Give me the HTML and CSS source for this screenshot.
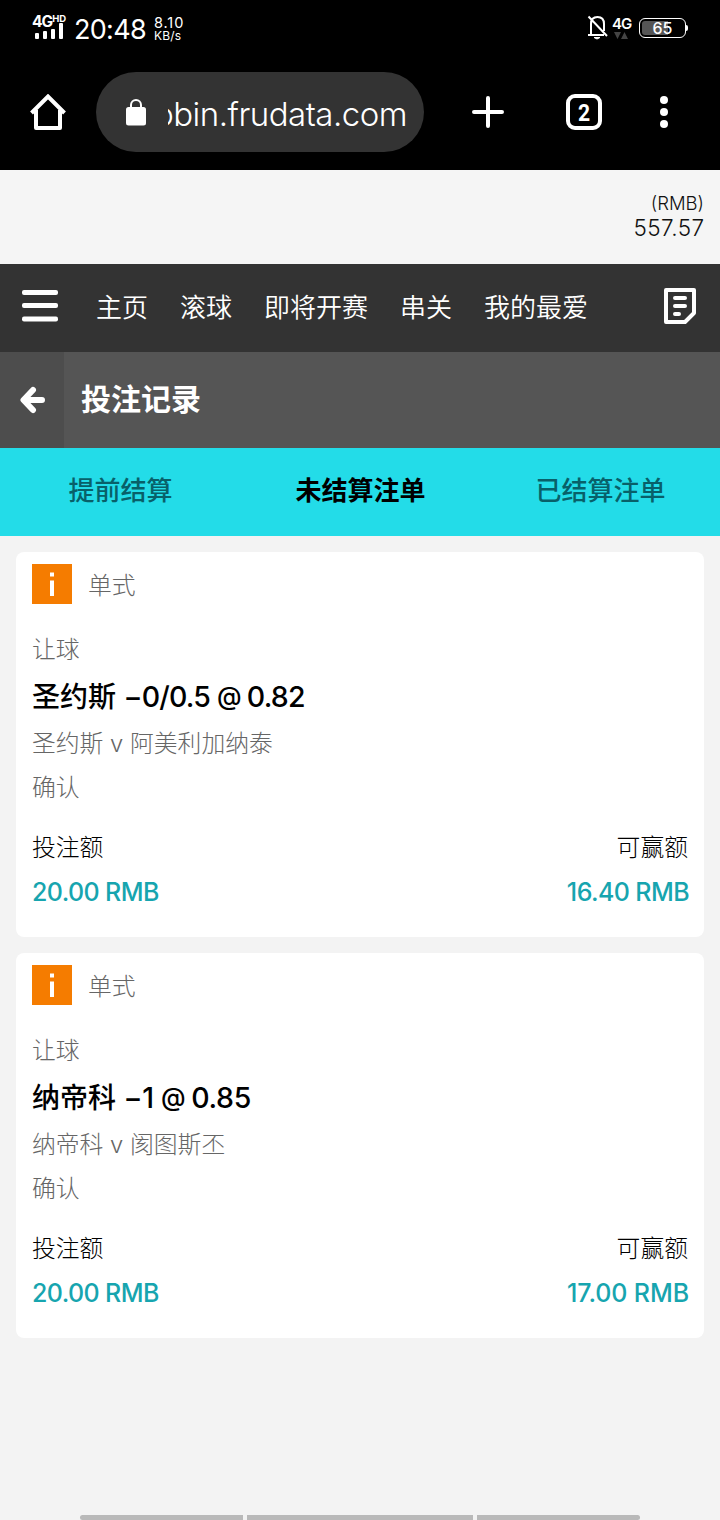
FILE: index.html
```html
<!DOCTYPE html>
<html lang="zh-CN">
<head>
<meta charset="utf-8">
<title>投注记录</title>
<link rel="stylesheet" href="styles.css">
</head>
<body>
<div class="screen">
  <div class="status">
    <div class="signal">
      <div class="signal-label">4G<span class="hd">HD</span></div>
      <svg width="30" height="17" viewBox="0 0 30 17" fill="#fff"><rect x="0" y="10" width="4" height="6" rx="1"/><rect x="8" y="8" width="4" height="8" rx="1"/><rect x="16" y="6" width="4" height="10" rx="1"/><rect x="24" y="0" width="4" height="16" rx="1"/></svg>
    </div>
    <div class="clock">20:48</div>
    <div class="speed"><span class="rate">8.10</span><span class="unit">KB/s</span></div>
    <div class="status-right">
      <svg class="bell" width="22" height="26" viewBox="0 0 22 26" fill="none" stroke="#fff" stroke-width="2"><path d="M4 21V10C4 5.500 6.500 3 10.500 3S17 5.500 17 10V17M1 21H17M1.500 2.500 20 22"/><path d="M7 23.500H13L10 25Z" fill="#fff" stroke-width="1"/></svg>
      <div class="net"><span class="net-label">4G</span><svg width="14" height="8" viewBox="0 0 14 8" fill="#444"><path d="M0 0H7L3.500 7ZM7 7H14L10.500 0Z"/></svg></div>
      <div class="battery"><span class="level">65</span></div><div class="cap"></div>
    </div>
  </div>
  <div class="browser">
    <svg class="home" width="36" height="36" viewBox="0 0 36 36" fill="none" stroke="#fff" stroke-width="4" stroke-linejoin="round"><path d="M1.500 19 18 2.500 34.500 19" stroke-linejoin="miter"/><path d="M6 16V34H30V16"/></svg>
    <div class="url">
      <svg width="20" height="27" viewBox="0 0 20 27"><rect y="8" width="20" height="18.500" rx="2.500" fill="#fff"/><path d="M5 9V6a5 5 0 0 1 10 0V9" fill="none" stroke="#fff" stroke-width="2"/></svg>
      <div class="address"><span>obin.frudata.com</span></div>
    </div>
    <svg class="plus" width="32" height="32" viewBox="0 0 32 32" stroke="#fff" stroke-width="4" stroke-linecap="round"><path d="M2 16H30M16 2V30"/></svg>
    <div class="tabs-count"><span>2</span></div>
    <svg class="dots" width="8" height="32" viewBox="0 0 8 32" fill="#fff"><circle cx="4" cy="4" r="4"/><circle cx="4" cy="16" r="4"/><circle cx="4" cy="28" r="4"/></svg>
  </div>
  <div class="balance"><span class="currency">(RMB)</span><span class="sum">557.57</span></div>
  <nav class="nav">
    <svg class="menu" width="36" height="32" viewBox="0 0 36 32" fill="#fff"><rect width="36" height="5" rx="2"/><rect y="13" width="36" height="5" rx="2"/><rect y="26.500" width="36" height="5" rx="2"/></svg>
    <div class="links"><span>主页</span><span>滚球</span><span>即将开赛</span><span>串关</span><span>我的最爱</span></div>
    <svg class="slip" width="32" height="36" viewBox="0 0 32 36" fill="none" stroke="#fff" stroke-width="4" stroke-linejoin="round"><path d="M2 2H30V25L21 34H2Z"/><path d="M11 10H21M11 18H21M11 26H15" stroke-linecap="round"/></svg>
  </nav>
  <header class="title">
    <div class="back"><svg width="26" height="28" viewBox="0 0 26 28" fill="none" stroke="#fff" stroke-width="6" stroke-linecap="round" stroke-linejoin="round"><path d="M13 4 3.500 14 13 24M4 14H22"/></svg></div>
    <h1>投注记录</h1>
  </header>
  <div class="tabs"><span>提前结算</span><span class="active">未结算注单</span><span>已结算注单</span></div>
  <main class="bets">
    <section class="bet">
      <div class="head"><svg class="info" width="40" height="40" viewBox="0 0 40 40"><rect width="40" height="40" fill="#f57c00"/><path d="M18 8.500h4v4h-4zM18 16.500h4V32h-4z" fill="#fff"/></svg><span>单式</span></div>
      <div class="line">让球</div>
      <div class="pick">圣约斯 <span class="odds">−0/0.5 <span class="at">@</span> 0.82</span></div>
      <div class="line">圣约斯 v 阿美利加纳泰</div>
      <div class="line">确认</div>
      <div class="labels"><span>投注额</span><span>可赢额</span></div>
      <div class="amounts"><span>20.00 RMB</span><span>16.40 RMB</span></div>
    </section>
    <section class="bet">
      <div class="head"><svg class="info" width="40" height="40" viewBox="0 0 40 40"><rect width="40" height="40" fill="#f57c00"/><path d="M18 8.500h4v4h-4zM18 16.500h4V32h-4z" fill="#fff"/></svg><span>单式</span></div>
      <div class="line">让球</div>
      <div class="pick">纳帝科 <span class="odds whole">−1 <span class="at">@</span> 0.85</span></div>
      <div class="line">纳帝科 v 阂图斯丕</div>
      <div class="line">确认</div>
      <div class="labels"><span>投注额</span><span>可赢额</span></div>
      <div class="amounts"><span>20.00 RMB</span><span class="wide">17.00 RMB</span></div>
    </section>
  </main>
  <div class="gesture"><i></i><i></i><i></i></div>
</div>
</body>
</html>
```
FILE: styles.css
```css
* { box-sizing: border-box; }
body { margin: 0; font-family: Inter, "Noto Sans CJK SC", sans-serif; }
svg { display: block; flex: none; }
span { white-space: nowrap; }
.screen { width: 720px; height: 1520px; display: flex; flex-direction: column; background: #f3f3f3; overflow: hidden; }
.status { height: 56px; background: #000; color: #fff; display: flex; padding-left: 32px; }
.signal { width: 42px; padding-top: 14px; }
.signal-label { display: flex; height: 9px; font-size: 15.5px; line-height: 15px; font-weight: 700; letter-spacing: -1px; }
.hd { font-size: 9.5px; line-height: 9px; letter-spacing: 0; }
.signal svg { margin-left: 3px; }
.clock { width: 80px; font-size: 27px; line-height: 60px; letter-spacing: -0.7px; }
.speed { display: flex; flex-direction: column; padding-top: 16px; }
.rate { font-size: 14.5px; line-height: 14px; letter-spacing: 0.9px; }
.unit { font-size: 12px; line-height: 11px; letter-spacing: 0.2px; }
.status-right { display: flex; margin-left: auto; padding: 14px 32px 0 0; }
.bell { margin-left: -1px; }
.net { width: 20px; margin: 1px 7px 0 3px; }
.net-label { display: block; font-size: 15px; line-height: 17px; font-weight: 600; letter-spacing: -1px; }
.net svg { margin-left: 2px; }
.battery { width: 47px; height: 20px; margin-top: 4px; border: 1.5px solid #fff; border-radius: 6px; background: linear-gradient(90deg, #555 0 28px, #000 28px); background-clip: padding-box; box-shadow: inset 0 0 0 2px #000; text-align: center; }
.level { font-size: 16px; line-height: 19px; font-weight: 500; display: block; }
.cap { width: 2px; height: 6px; margin-top: 11px; background: #fff; border-radius: 0 2px 2px 0; }
.browser { height: 114px; padding: 16px 52px 18px 30px; background: #000; display: flex; align-items: center; }
.url { width: 328px; height: 80px; margin-left: 30px; padding: 0 16px 0 30px; border-radius: 40px; background: #333; display: flex; align-items: center; justify-content: space-between; }
.address { width: 240px; display: flex; justify-content: flex-end; overflow: hidden; color: #fff; font-size: 33px; font-weight: 300; line-height: 44px; letter-spacing: -0.5px; padding: 3px 1px 0 0; }
.plus { margin-left: 48px; }
.tabs-count { width: 36px; height: 36px; margin-left: 62px; border: 4px solid #fff; border-radius: 9px; color: #fff; font: 700 24px/30px Roboto, sans-serif; text-align: center; }
.tabs-count span { display: block; transform: scaleX(0.88); }
.dots { margin-left: auto; }
.balance { height: 94px; padding: 22px 16px 0; background: #f5f5f5; color: #111; display: flex; flex-direction: column; align-items: flex-end; font-weight: 300; }
.currency { font-size: 18.5px; line-height: 23px; }
.sum { font-size: 22.5px; line-height: 25px; letter-spacing: 0.4px; margin-right: -0.4px; }
.nav { height: 88px; padding: 0 24px 0 22px; background: #333; color: #fff; display: flex; align-items: center; }
.menu { margin-bottom: 4px; }
.links { display: flex; gap: 32px; margin-left: 38px; font-size: 26px; line-height: 88px; height: 88px; font-weight: 350; }
.slip { margin: 0 0 4px auto; }
.title { height: 96px; background: #555; color: #fff; display: flex; }
.back { width: 64px; background: #4d4d4d; display: flex; align-items: center; padding-left: 20px; }
h1 { margin: 0 0 0 17px; font-size: 30px; line-height: 95px; font-weight: 700; }
.tabs { height: 88px; display: grid; grid-template-columns: repeat(3, 1fr); text-align: center; background: #23dce8; color: #086069; font-size: 26px; line-height: 86px; font-weight: 500; }
.tabs span { padding-left: 1px; }
.tabs .active { color: #000; font-weight: 600; }
.bets { flex: 1; padding: 16px; display: flex; flex-direction: column; gap: 16px; }
.bet { height: 385px; padding: 1px 16px 0; background: #fff; border-radius: 8px; color: #666; font-size: 23.8px; font-weight: 300; }
.head { height: 75px; display: flex; gap: 16px; line-height: 66px; }
.info { margin-top: 10.5px; }
.line { line-height: 44px; white-space: nowrap; }
.pick { height: 50px; line-height: 49px; font-size: 28px; font-weight: 500; color: #000; white-space: nowrap; }
.odds { font-size: 28.5px; letter-spacing: -0.8px; }
.odds.whole { letter-spacing: -0.35px; }
.at { font-size: 25px; letter-spacing: -1.5px; vertical-align: 2px; line-height: 1; }
.labels, .amounts { display: flex; justify-content: space-between; line-height: 44px; }
.labels { margin-top: 16px; color: #000; }
.amounts { color: #17a5af; font-size: 25px; font-weight: 500; letter-spacing: -0.6px; }
.amounts span:last-child { margin-right: -1px; }
.amounts .wide { letter-spacing: -0.1px; }
.gesture { height: 5px; padding: 0 80px; display: flex; gap: 4px; }
.gesture i { height: 5px; flex: 163; background: #b9b9b9; }
.gesture i:nth-child(2) { flex: 226; }
.gesture i:first-child { border-radius: 3px 0 0 3px; }
.gesture i:last-child { border-radius: 0 3px 3px 0; }
```
